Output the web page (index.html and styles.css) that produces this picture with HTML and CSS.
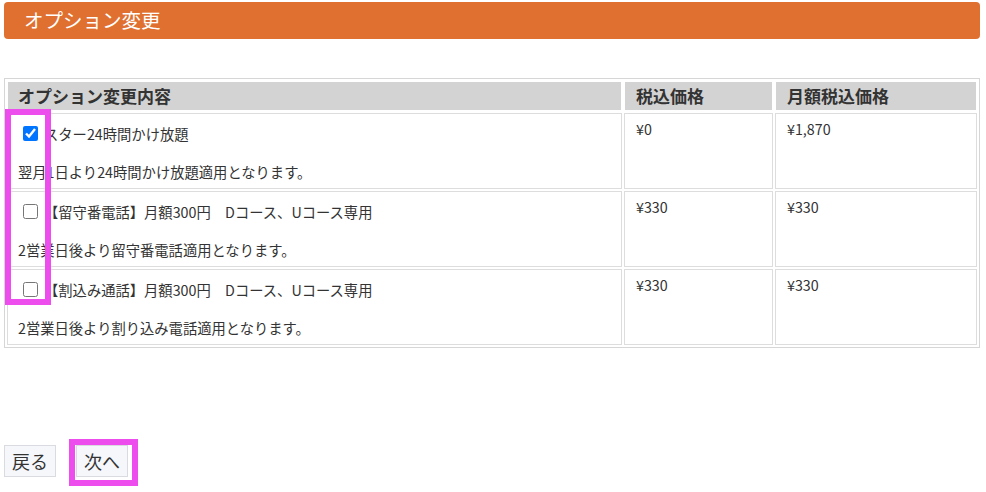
FILE: index.html
```html
<!DOCTYPE html>
<html lang="ja">
<head>
<meta charset="utf-8">
<title>オプション変更</title>
<link rel="stylesheet" href="styles.css">
</head>
<body>
<div class="page">
  <h1 class="title-bar">オプション変更</h1>

  <table class="option-table">
    <colgroup>
      <col class="col-content">
      <col class="col-price">
      <col class="col-monthly">
    </colgroup>
    <thead>
      <tr>
        <th class="th-content">オプション変更内容</th>
        <th>税込価格</th>
        <th>月額税込価格</th>
      </tr>
    </thead>
    <tbody>
      <tr>
        <td class="td-content">
          <div class="opt-line"><input type="checkbox" class="opt-check" checked><span>スター24時間かけ放題</span></div>
          <div class="opt-desc">翌月1日より24時間かけ放題適用となります。</div>
        </td>
        <td class="td-price">¥0</td>
        <td class="td-price">¥1,870</td>
      </tr>
      <tr>
        <td class="td-content">
          <div class="opt-line"><input type="checkbox" class="opt-check"><span>【留守番電話】月額300円　Dコース、Uコース専用</span></div>
          <div class="opt-desc">2営業日後より留守番電話適用となります。</div>
        </td>
        <td class="td-price">¥330</td>
        <td class="td-price">¥330</td>
      </tr>
      <tr>
        <td class="td-content">
          <div class="opt-line"><input type="checkbox" class="opt-check"><span>【割込み通話】月額300円　Dコース、Uコース専用</span></div>
          <div class="opt-desc">2営業日後より割り込み電話適用となります。</div>
        </td>
        <td class="td-price">¥330</td>
        <td class="td-price">¥330</td>
      </tr>
    </tbody>
  </table>

  <div class="actions">
    <button type="button" class="btn">戻る</button>
    <button type="button" class="btn">次へ</button>
  </div>

  <div class="highlight highlight-checks"></div>
  <div class="highlight highlight-next"></div>
</div>
</body>
</html>
```

FILE: styles.css
```css
* {
  box-sizing: border-box;
}

html, body {
  margin: 0;
  padding: 0;
  background: #ffffff;
}

body {
  font-family: "Noto Sans CJK JP", "Noto Sans", "Liberation Sans", sans-serif;
  color: #333333;
  font-size: 14px;
}

.page {
  position: relative;
  padding: 2px 6px 0 4px;
  min-height: 492px;
}

.title-bar {
  margin: 0;
  height: 37px;
  background: #e07030;
  border-radius: 4px;
  color: #ffffff;
  font-size: 19.5px;
  font-weight: normal;
  line-height: 36px;
  padding-left: 20px;
}

.option-table {
  margin-top: 39px;
  width: 976px;
  table-layout: fixed;
  border: 1px solid #d6d6d6;
  border-collapse: separate;
  border-spacing: 2px;
}

.col-content { width: 615px; }
.col-price { width: 149px; }
.col-monthly { width: 202px; }

.option-table th {
  background: #d3d3d3;
  border: 1px solid #ffffff;
  text-align: left;
  font-size: 17px;
  font-weight: bold;
  line-height: 21px;
  padding: 3px 11px 4px 11px;
  color: #333333;
}

.option-table th.th-content {
  padding-left: 10px;
}

.option-table td {
  border: 1px solid #dddddd;
  vertical-align: top;
}

.td-content {
  padding: 10px 10px 7px 10px;
  line-height: 19px;
  font-size: 14.3px;
}

.opt-line {
  display: flex;
  align-items: center;
  height: 19px;
}

.opt-check {
  width: 15px;
  height: 15px;
  margin: 0 6px 0 5px;
  accent-color: #0075ff;
  flex: none;
}

.opt-desc {
  margin-top: 19px;
}

.td-price {
  padding: 5px 11px;
  line-height: 19px;
  font-size: 14.3px;
}

.actions {
  display: flex;
  gap: 20px;
  margin-top: 97px;
  align-items: center;
}

.btn {
  font-family: "Noto Sans CJK JP", "Noto Sans", sans-serif;
  font-size: 18px;
  color: #333333;
  background: #f5f7fb;
  border: 1px solid #d9dbe0;
  border-radius: 0;
  height: 32px;
  padding: 0 7px;
  line-height: 28px;
}

.highlight {
  position: absolute;
  border: 6px solid #ec4dec;
  pointer-events: none;
}

.highlight-checks {
  left: 5px;
  top: 109px;
  width: 46px;
  height: 196px;
}

.highlight-next {
  left: 69px;
  top: 439px;
  width: 69px;
  height: 47px;
}
```
